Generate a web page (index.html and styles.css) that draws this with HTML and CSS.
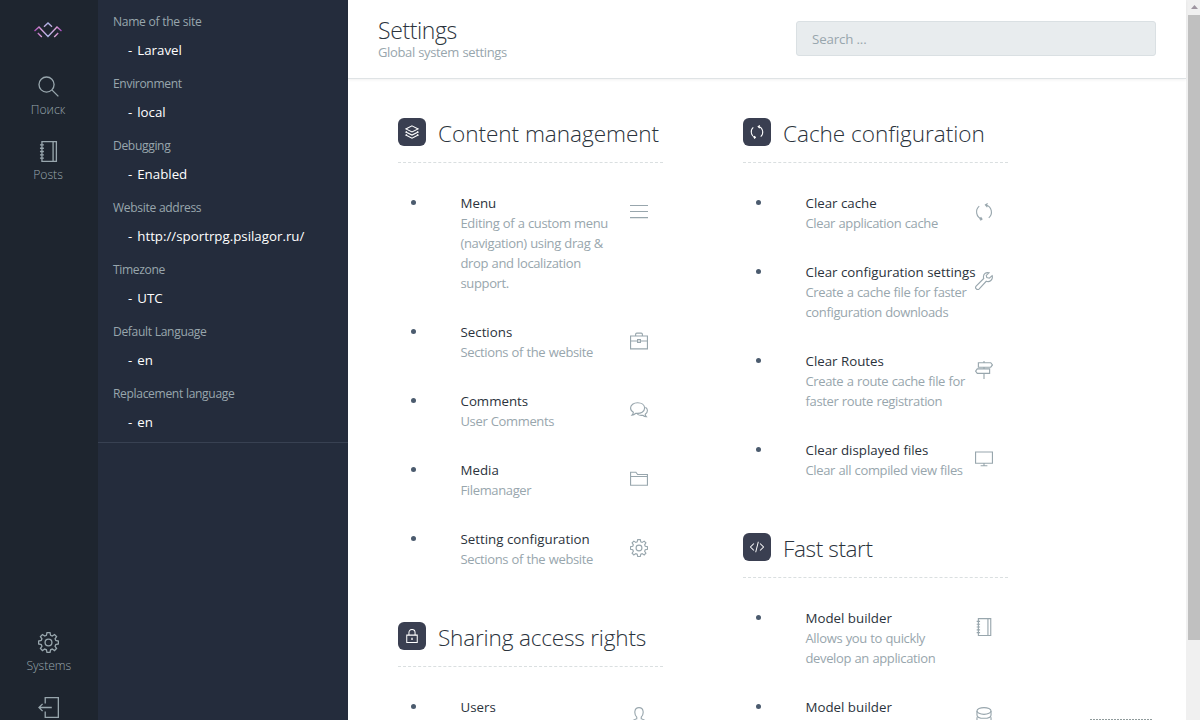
FILE: index.html
```html
<!DOCTYPE html>
<html lang="en">
<head>
<meta charset="utf-8">
<title>Settings</title>
<link rel="stylesheet" href="styles.css">
</head>
<body>
<svg class="sprite" aria-hidden="true">
  <symbol id="search" viewBox="0 0 32 32"><circle cx="13" cy="13" r="11.5"/><path d="M21.5 21.5 31 31"/></symbol>
  <symbol id="notebook" viewBox="0 0 32 32"><path d="M6 1h22v30H6zM23 1v30M3 6h6M3 11h6M3 16h6M3 21h6M3 26h6"/></symbol>
  <symbol id="gear" viewBox="0 0 32 32"><circle cx="16" cy="16" r="5.2"/><path d="M13.7 1h4.6l.9 4 2.5 1.100 3.500-2.300 3.100 3.100-2.300 3.500 1.100 2.500 4 .8v4.600l-4 .9-1.100 2.500 2.300 3.500-3.100 3.100-3.500-2.300-2.500 1.100-.9 4h-4.600l-.9-4-2.500-1.100-3.500 2.300-3.100-3.100 2.300-3.500-1.100-2.500-4-.9v-4.600l4-.8 1.100-2.500-2.300-3.500 3.100-3.100 3.500 2.300 2.500-1.100z"/></symbol>
  <symbol id="exit" viewBox="0 0 32 32"><path d="M11 10V1h20v30H11v-9M21 16H1.500M7 10.500 1.500 16 7 21.500"/></symbol>
  <symbol id="layers" viewBox="0 0 32 32"><path d="M16 2 30 9 16 16 2 9zM4.500 14.500 2 16l14 7 14-7-2.500-1.500M4.500 21.500 2 23l14 7 14-7-2.500-1.500"/></symbol>
  <symbol id="refresh" viewBox="0 0 32 32"><path d="M12 28.500A13.500 13.500 0 0 1 7.500 5.500M9.500 31l3-2.500L10 25M20 3.500a13.500 13.500 0 0 1 4.500 23M22.500 1l-4 2.500L22 7.500M18 3.500h2M12 28.500H8"/></symbol>
  <symbol id="lock" viewBox="0 0 32 32"><path d="M4 14h24v17H4zM9 14V8a7 7 0 0 1 14 0v6"/><path d="M16 20v5" stroke-width="3"/></symbol>
  <symbol id="code" viewBox="0 0 32 32"><path d="M9 8 1 16l8 8M23 8l8 8-8 8M19 4l-6 24"/></symbol>
  <symbol id="menu" viewBox="0 0 32 32"><path d="M0 4.500h32M0 15.200h32M0 26h32"/></symbol>
  <symbol id="case" viewBox="0 0 32 32"><path d="M1 7h30v23H1zM10 7V4q0-2 2-2h8q2 0 2 2v3M1 16h12M19 16h12M13.500 13.500h5v5h-5z"/></symbol>
  <symbol id="chat" viewBox="0 0 32 32"><path d="M13.500 3C6.500 3 1 7 1 12.500c0 3.500 2.200 6 5 7.500 0 2-1 3.500-2.500 5 3 0 5-1.500 7-3.200 9 1.200 15.500-3.300 15.500-9.300S20.500 3 13.500 3zM27.500 11c2.300 1.500 3.500 3.600 3.500 6 0 3-1.500 5-4 6.500 0 2 .7 3.200 2 4.500-3 0-4.500-1-6.300-2.700-3.700.7-7-.1-9.700-2"/></symbol>
  <symbol id="folder" viewBox="0 0 32 32"><path d="M1 27V4h9.500l3 4H31v19zM1 11.500h30"/></symbol>
  <symbol id="user" viewBox="0 0 32 32"><path d="M12 21v-3C7 13 7 1 16 1s9 12 4 17v3c6 2 9 3 9 10H3c0-7 3-8 9-10z"/></symbol>
  <symbol id="wrench" viewBox="0 0 32 32"><path d="M30.500 6.500 25.500 11 21 10l-1-4 5-4.500c-5-1.500-10 1.500-10 7 0 1 .2 2 .5 3L2 25c-3 3.500 2 8.500 5.500 5L20 16.500c6 2.500 12.500-3 10.500-10z"/></symbol>
  <symbol id="signs" viewBox="0 0 32 32"><path d="M16 0v3M16 11v3M16 22v10M6 3h22l3 4-3 4H6zM26 14H4l-3 4 3 4h22z"/></symbol>
  <symbol id="screen" viewBox="0 0 32 32"><path d="M1 3.500h30v20H1zM16 23.500v4.500M10 28h12"/></symbol>
  <symbol id="database" viewBox="0 0 32 32"><ellipse cx="16" cy="7" rx="12.500" ry="6"/><path d="M3.500 7v7c0 8 25 8 25 0V7M3.500 18v5c0 8 25 8 25 0v-5"/></symbol>
</svg>

<div class="app">
  <nav class="rail">
    <svg class="logo" viewBox="0 0 28 16">
      <defs><linearGradient id="brand" x1="0" x2="1"><stop offset="0" stop-color="#a94bb5"/><stop offset=".25" stop-color="#d9a0d8"/><stop offset=".5" stop-color="#aab4e6"/><stop offset=".8" stop-color="#dda3d5"/><stop offset="1" stop-color="#a548bd"/></linearGradient></defs>
      <path d="M.5 9 5 5l9 9.500L23 5l4.500 4M10 4.700 14 1l4 3.700M3.800 11l4 4M24.200 11l-4 4" stroke="url(#brand)"/>
    </svg>
    <a class="rail-link first"><svg class="icon big"><use href="#search"/></svg><span>Поиск</span></a>
    <a class="rail-link"><svg class="icon big"><use href="#notebook"/></svg><span>Posts</span></a>
    <div class="rail-foot">
      <a class="rail-link"><svg class="icon big"><use href="#gear"/></svg><span>Systems</span></a>
      <a class="rail-link"><svg class="icon big"><use href="#exit"/></svg></a>
    </div>
  </nav>

  <aside class="info">
    <dl>
      <dt>Name of the site</dt><dd>- Laravel</dd>
      <dt>Environment</dt><dd>- local</dd>
      <dt>Debugging</dt><dd>- Enabled</dd>
      <dt>Website address</dt><dd>- http://sportrpg.psilagor.ru/</dd>
      <dt>Timezone</dt><dd>- UTC</dd>
      <dt>Default Language</dt><dd>- en</dd>
      <dt>Replacement language</dt><dd>- en</dd>
    </dl>
  </aside>

  <main class="main">
    <header class="top">
      <div>
        <h1>Settings</h1>
        <p class="lead">Global system settings</p>
      </div>
      <input class="search" type="text" placeholder="Search ...">
    </header>
    <div class="columns">
      <div class="column">
        <section>
          <h2><i class="badge"><svg class="icon"><use href="#layers"/></svg></i><span class="wide">Content management</span></h2>
          <ul>
            <li><div class="body"><b>Menu</b><p>Editing of a custom menu (navigation) using drag &amp; drop and localization support.</p></div><svg class="icon"><use href="#menu"/></svg></li>
            <li><div class="body"><b>Sections</b><p>Sections of the website</p></div><svg class="icon"><use href="#case"/></svg></li>
            <li><div class="body"><b>Comments</b><p>User Comments</p></div><svg class="icon"><use href="#chat"/></svg></li>
            <li><div class="body"><b>Media</b><p>Filemanager</p></div><svg class="icon"><use href="#folder"/></svg></li>
            <li><div class="body"><b>Setting configuration</b><p>Sections of the website</p></div><svg class="icon"><use href="#gear"/></svg></li>
          </ul>
        </section>
        <section>
          <h2><i class="badge"><svg class="icon"><use href="#lock"/></svg></i><span>Sharing access rights</span></h2>
          <ul>
            <li><div class="body"><b>Users</b></div><svg class="icon"><use href="#user"/></svg></li>
          </ul>
        </section>
      </div>
      <div class="column">
        <section>
          <h2><i class="badge"><svg class="icon"><use href="#refresh"/></svg></i><span class="wide">Cache configuration</span></h2>
          <ul>
            <li><div class="body"><b>Clear cache</b><p>Clear application cache</p></div><svg class="icon"><use href="#refresh"/></svg></li>
            <li><div class="body"><b>Clear configuration settings</b><p>Create a cache file for faster configuration downloads</p></div><svg class="icon"><use href="#wrench"/></svg></li>
            <li><div class="body"><b>Clear Routes</b><p>Create a route cache file for faster route registration</p></div><svg class="icon"><use href="#signs"/></svg></li>
            <li><div class="body"><b>Clear displayed files</b><p>Clear all compiled view files</p></div><svg class="icon"><use href="#screen"/></svg></li>
          </ul>
        </section>
        <section>
          <h2><i class="badge"><svg class="icon"><use href="#code"/></svg></i><span class="tight">Fast start</span></h2>
          <ul>
            <li><div class="body"><b>Model builder</b><p>Allows you to quickly develop an application</p></div><svg class="icon"><use href="#notebook"/></svg></li>
            <li><div class="body"><b>Model builder</b></div><svg class="icon"><use href="#database"/></svg></li>
          </ul>
        </section>
      </div>
    </div>
    <div class="edge-mark"></div>
  </main>

  <div class="scrollbar">
    <svg class="arrow" viewBox="0 0 7 4"><path d="M0 4 3.500 0 7 4z"/></svg>
    <div class="thumb"></div>
  </div>
</div>
</body>
</html>
```
FILE: styles.css
```css
* { box-sizing: border-box; }
body { margin: 0; font: 13.3px/20px "Open Sans", "Noto Sans", sans-serif; color: #98a6ad; background: #fff; overflow: hidden; }
h1, h2, p, ul, dl, dd { margin: 0; padding: 0; font-weight: 400; }
.sprite { position: absolute; width: 0; height: 0; }
.app { display: flex; width: 1200px; height: 720px; overflow: hidden; }
.icon { display: block; width: 18px; height: 18px; fill: none; stroke: #98a6ad; stroke-width: 2; overflow: visible; }
.icon.big { width: 21px; height: 21px; stroke-width: 2; }

.rail { display: flex; flex-direction: column; align-items: center; width: 98px; padding: 22px 2px 0 0; background: #1e252f; }
.logo { width: 28px; height: 16px; fill: none; stroke-width: 1.4; flex: none; }
.rail-link { display: flex; flex: none; flex-direction: column; align-items: center; gap: 3px; height: 65px; font-size: 12.2px; font-weight: 300; }
.rail-link.first { margin-top: 37.500px; }
.rail-foot { display: flex; flex-direction: column; margin-top: auto; padding-left: 1.500px; height: 88.500px; align-items: center; letter-spacing: -.1px; }

.info { width: 250px; background: #242c3c; }
.info dl { height: 443px; padding: 12px 15px 0; border-bottom: 1px solid #384152; }
.info dt { height: 20px; font-size: 12.1px; letter-spacing: -.35px; word-spacing: .3px; }
.info dd { height: 42px; padding: 8px 0 0 15px; color: #fff; font-weight: 500; word-spacing: 1.500px; }

.main { position: relative; width: 838px; }
.top { display: flex; justify-content: space-between; height: 79px; padding: 16px 30px 0; border-bottom: 1px solid #dfe3e5; box-shadow: 0 1px 3px rgba(0,0,0,.06); }
h1 { font-size: 23px; line-height: 29px; font-weight: 300; letter-spacing: -.4px; color: #2b333c; }
p { font-size: 13px; letter-spacing: -.36px; word-spacing: .4px; }
.lead { line-height: 15px; }
.search { width: 360px; height: 35px; margin-top: 5px; padding: 0 15px; border: 1px solid #dae0e3; border-radius: 3px; background: #e8ecee; font: inherit; letter-spacing: -.15px; }
.search::placeholder { color: #98a6ad; opacity: 1; }

.columns { display: flex; gap: 80px; padding: 39px 50px 0; height: 641px; overflow: hidden; }
.column { width: 265px; flex: none; }
h2 { display: flex; gap: 12px; height: 45px; border-bottom: 1px dashed #dadfe0; font-size: 22.6px; line-height: 31px; font-weight: 300; letter-spacing: -.2px; color: #2b333c; white-space: nowrap; }
h2 .wide { letter-spacing: -.05px; }
h2 .tight { letter-spacing: -.4px; }
.badge { display: grid; place-items: center; width: 28px; height: 28px; border-radius: 6px; background: #3a3f51; }
.badge .icon { width: 14px; height: 14px; stroke: #fff; stroke-width: 2.300; }
ul { padding-top: 30px; list-style: none; }
li { display: flex; min-height: 20px; margin-bottom: 29px; }
li::before { content: ""; width: 5px; height: 5px; margin: 7px 44.500px 0 13px; border-radius: 50%; background: #4b5b6e; flex: none; }
.body { width: 155px; margin-right: 14.400px; flex: none; }
.column + .column .body { width: 162px; margin-right: 7.400px; }
.body b { display: block; font-weight: 400; color: #2b333c; white-space: nowrap; }
li > .icon { margin-top: 9.500px; }
section { padding-bottom: 24px; }
.edge-mark { position: absolute; left: 742px; bottom: 0; width: 62px; height: 1px; background: repeating-linear-gradient(90deg, #909b9c 0 2px, #fff 2px 3px); }

.scrollbar { width: 14px; padding: 5px 0 0 2px; background: #f0f0f0; }
.arrow { display: block; width: 7px; height: 4px; margin: 0 0 6px 3px; fill: #9e95a0; }
.thumb { height: 625px; background: #c0c0c0; }
```
